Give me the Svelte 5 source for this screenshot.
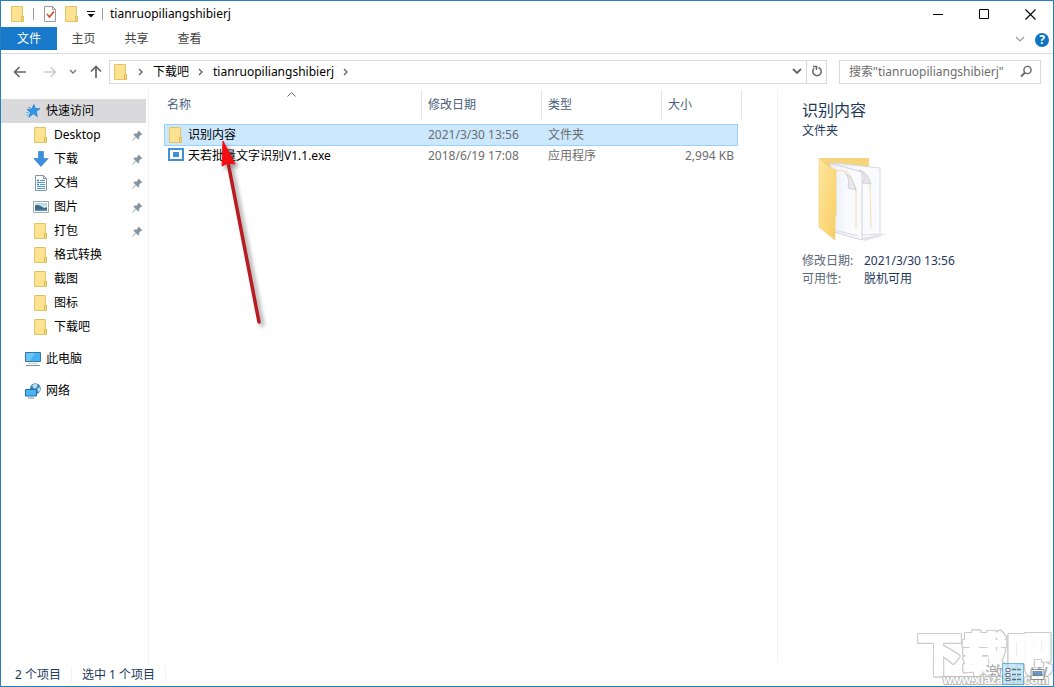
<script>
  let query = $state('');
  const places = [
    { name: 'Desktop', icon: 'folder', pinned: true },
    { name: '下载', icon: 'download', pinned: true },
    { name: '文档', icon: 'document', pinned: true },
    { name: '图片', icon: 'picture', pinned: true },
    { name: '打包', icon: 'folder', pinned: true },
    { name: '格式转换', icon: 'folder' },
    { name: '截图', icon: 'folder' },
    { name: '图标', icon: 'folder' },
    { name: '下载吧', icon: 'folder' }
  ];
  const files = [
    { name: '识别内容', icon: 'folder', date: '2021/3/30 13:56', type: '文件夹', size: '', selected: true },
    { name: '天若批量文字识别V1.1.exe', icon: 'app', date: '2018/6/19 17:08', type: '应用程序', size: '2,994 KB' }
  ];
</script>

{#snippet icon(kind)}
  <svg class="icon" width="16" height="16" viewBox="0 0 16 16" aria-hidden="true">
    {#if kind === 'folder'}
      <path d="M1.500 .5h11v10h1v5h-12z" fill="#fde391" stroke="#e3c468" />
      <path d="M11.500 15v-4.500h2v4.500z" fill="#f8d775" stroke="#e0bd5b" />
    {:else if kind === 'download'}
      <path d="M5.500 .5h5v7h4.700L8 15.500.8 7.500h4.700z" fill="#3b8fe0" stroke="#2f79c8" stroke-width=".6" />
    {:else if kind === 'document'}
      <path d="M2.500 .5h8l3 3v12h-11z" fill="#fff" stroke="#8496a4" />
      <path d="M10.500 .5v3h3" fill="none" stroke="#8496a4" />
      <path d="M7 5.500h5M4 7.500h8M7 9.500h5M4 11.500h8M4 13.500h8" stroke="#4a9bd1" />
      <path d="M4.200 5.500h1.800M4.200 9.500h1.800" stroke="#1d6fb3" stroke-width="1.500" />
    {:else if kind === 'picture'}
      <path d="M.5 2.500h15v11H.5z" fill="#fff" stroke="#a4a9ad" />
      <path d="M2 4h12v3.500H2z" fill="#b9dcf2" />
      <path d="M2 6.500q3-1.500 6 .8t6 .7v3H2z" fill="#3d6a78" />
      <path d="M2 10.500h12V12H2z" fill="#4e91c4" />
    {:else if kind === 'star'}
      <path d="M9 1.500l1.200 4 4.800.1-3.800 3 1.200 4.900-4-2.700-4.600 3.400 1.700-5L2 6.500l4.800-.6z" fill="#2f96e8" stroke="#1b78c8" stroke-width=".7" />
      <path d="M1 9.500h3M1 11.800h3M3 4.500h3" stroke="#6cb8ee" />
    {:else if kind === 'pc'}
      <path d="M.5 1.500h15v9H.5z" fill="#45b3f3" stroke="#36769f" />
      <path d="M1 2h9L5 10H1z" fill="#86d2fb" opacity=".6" />
      <path d="M1 14.500h14" stroke="#7c8e9b" />
      <path d="M3 12.500h10" stroke="#c5d0d8" />
    {:else if kind === 'network'}
      <circle cx="10.400" cy="5.600" r="5.400" fill="#3a83b5" />
      <path d="M7 3q3-3.500 5-1.500T9.500 6zM12 6l3-2q1 3-1.500 5.500z" fill="#b5dcf2" />
      <path d="M.5 6.500h11v6.500H.5z" fill="#47b5f5" stroke="#2b6b96" />
      <path d="M3 15h6" stroke="#7790a1" />
    {:else if kind === 'app'}
      <path d="M1 1h14v11H1z" fill="#fff" stroke="#4092d6" stroke-width="2" />
      <path d="M5 4h6v5H5z" fill="#4092d6" />
    {/if}
  </svg>
{/snippet}

{#snippet chevron()}
  <svg width="6" height="8" viewBox="0 0 6 8" aria-hidden="true"><path d="M1 1l3 3-3 3" fill="none" stroke="#666" stroke-width="1.400" /></svg>
{/snippet}

<div class="window">
  <header class="titlebar">
    <span class="title-icon">{@render icon('folder')}</span>
    <i class="bar"></i>
    <button class="plain" aria-label="属性">
      <svg width="14" height="16" viewBox="0 0 14 16"><path d="M1.500 .5h8l3 3v12h-11z" fill="#fff" stroke="#9b9b9b" /><path d="M9.500 .5v3h3" fill="none" stroke="#9b9b9b" /><path d="M4 8l2.500 3L11 5.500" fill="none" stroke="#d6492a" stroke-width="1.600" /></svg>
    </button>
    <button class="plain" aria-label="新建文件夹">{@render icon('folder')}</button>
    <button class="plain" aria-label="自定义快速访问工具栏">
      <svg width="8" height="8" viewBox="0 0 8 8"><path d="M0 1.500h8" stroke="#111" /><path d="M.5 4h7L4 7.500z" fill="#111" /></svg>
    </button>
    <i class="bar"></i>
    <h1>tianruopiliangshibierj</h1>
    <div class="controls">
      <button aria-label="最小化"><svg width="11" height="11"><path d="M0 5.500h10" stroke="#000" /></svg></button>
      <button aria-label="最大化"><svg width="11" height="11"><path d="M.5 .5h9v9h-9z" fill="none" stroke="#000" /></svg></button>
      <button aria-label="关闭"><svg width="11" height="11"><path d="M.5 .5l10 10M10.500 .5l-10 10" stroke="#000" stroke-width="1.100" /></svg></button>
    </div>
  </header>

  <nav class="ribbon" aria-label="功能区">
    <button class="file">文件</button>
    <button>主页</button>
    <button>共享</button>
    <button>查看</button>
    <span class="spacer"></span>
    <button class="plain" aria-label="展开功能区"><svg width="10" height="6"><path d="M1 1l4 4 4-4" fill="none" stroke="#999" stroke-width="1.200" /></svg></button>
    <button class="plain help" aria-label="帮助">?</button>
  </nav>

  <div class="address-row">
    <button class="plain" aria-label="后退"><svg width="14" height="12"><path d="M13 6H2M6.500 1L1.500 6l5 5" fill="none" stroke="#666" stroke-width="1.600" /></svg></button>
    <button class="plain" aria-label="前进"><svg width="14" height="12"><path d="M1 6h11M7.500 1l5 5-5 5" fill="none" stroke="#ccc" stroke-width="1.400" /></svg></button>
    <button class="plain recent" aria-label="最近位置"><svg width="8" height="6"><path d="M1 1l3 3 3-3" fill="none" stroke="#777" stroke-width="1.400" /></svg></button>
    <button class="plain up" aria-label="上移"><svg width="12" height="14"><path d="M6 13V2M1 6.500l5-5 5 5" fill="none" stroke="#666" stroke-width="1.700" /></svg></button>
    <div class="address">
      {@render icon('folder')}
      {@render chevron()}
      <a href="#parent">下载吧</a>
      {@render chevron()}
      <a href="#current">tianruopiliangshibierj</a>
      {@render chevron()}
      <span class="spacer"></span>
      <button class="plain drop" aria-label="历史记录"><svg width="10" height="7"><path d="M1 1l4 4 4-4" fill="none" stroke="#666" stroke-width="1.800" /></svg></button>
      <button class="plain refresh" aria-label="刷新"><svg width="12" height="13"><path d="M7.500 2.500a4.200 4.200 0 1 1-4.300.8" fill="none" stroke="#666" stroke-width="1.500" /><path d="M2 1.500h3.500V5" fill="none" stroke="#666" stroke-width="1.500" /></svg></button>
    </div>
    <label class="search">
      <input type="text" aria-label="搜索" placeholder={'搜索"tianruopiliangshibierj"'} bind:value={query} />
      <svg width="13" height="13" aria-hidden="true"><circle cx="7.500" cy="5" r="3.600" fill="none" stroke="#666" stroke-width="1.400" /><path d="M5 7.500L1 11.500" stroke="#666" stroke-width="1.800" /></svg>
    </label>
  </div>

  <main>
    <nav class="places" aria-label="导航窗格">
      <a class="root current" href="#quick">{@render icon('star')}快速访问</a>
      {#each places as place}
        <a class="child" href="#place">
          {@render icon(place.icon)}<span>{place.name}</span>
          {#if place.pinned}
            <svg class="pin" width="11" height="11" viewBox="0 0 11 11" aria-hidden="true"><path d="M6.500 .5l4 4-1 .6-.8-.2-1.700 2 .1 1.800-.9.8L4 7.200.8 10.600l-.5-.5L3.600 6.800 1.300 4.500l.9-.9 2 .2 1.900-1.700-.3-.9z" fill="#8494a1" /></svg>
          {/if}
        </a>
      {/each}
      <a class="root group" href="#pc">{@render icon('pc')}此电脑</a>
      <a class="root group" href="#network">{@render icon('network')}网络</a>
    </nav>

    <section class="files">
      <table>
        <thead>
          <tr>
            <th class="name">名称<svg class="sort" width="9" height="5" aria-hidden="true"><path d="M.5 4.500l4-4 4 4" fill="none" stroke="#666" /></svg></th>
            <th>修改日期</th>
            <th>类型</th>
            <th class="size">大小</th>
          </tr>
        </thead>
        <tbody>
          {#each files as file}
            <tr class:selected={file.selected}>
              <td><span class="file-name">{@render icon(file.icon)}{file.name}</span></td>
              <td>{file.date}</td>
              <td>{file.type}</td>
              <td class="size">{file.size}</td>
            </tr>
          {/each}
        </tbody>
      </table>
    </section>

    <aside class="details">
      <h2>识别内容</h2>
      <p>文件夹</p>
      <svg class="preview" width="72" height="88" viewBox="0 0 72 88" aria-hidden="true">
        <defs>
          <linearGradient id="cover" x2="1" y2="1"><stop stop-color="#ffe6a0" /><stop offset="1" stop-color="#f8ce62" /></linearGradient>
          <linearGradient id="sheet" x2="1"><stop stop-color="#e8edf4" /><stop offset=".6" stop-color="#fafbfe" /></linearGradient>
        </defs>
        <path d="M44 82l26-5-8 4-15 4z" fill="#e5e3e6" />
        <path d="M2 2h50v20H20z" fill="#f5d47c" />
        <path d="M17 7l46 5v66l-18 1z" fill="url(#sheet)" stroke="#d9dae2" />
        <path d="M53 28l1 44" fill="none" stroke="#f3dfae" />
        <path d="M44 15q5 3 2 12l8 1q-3-12-12-14z" fill="#e6e6ea" stroke="#bdbdc2" stroke-width=".6" />
        <path d="M13 7l32 9v68l-28-8z" fill="url(#sheet)" stroke="#d0d2da" />
        <path d="M19 15q10-2 14 4l6 14v40" fill="none" stroke="#f2ddb0" />
        <path d="M28 17q5 4 3 15l8 2q-3-13-11-17z" fill="#e9e9ed" stroke="#bcbcc3" stroke-width=".6" />
        <path d="M17 74l24 6" stroke="#d7d7df" />
        <path d="M2 2q5 7 17 12v45l-1 2v23L2 71z" fill="url(#cover)" stroke="#f2ce70" stroke-width=".6" />
      </svg>
      <dl>
        <dt>修改日期:</dt><dd>2021/3/30 13:56</dd>
        <dt>可用性:</dt><dd>脱机可用</dd>
      </dl>
    </aside>
  </main>

  <footer>
    <span>2 个项目</span>
    <span>选中 1 个项目</span>
  </footer>

  <svg class="arrow" width="60" height="200" viewBox="0 0 60 200" aria-hidden="true">
    <path d="M17 27L49 192" stroke="#b81c22" stroke-width="3.500" stroke-linecap="round" />
    <path d="M13 11L25 34l-7-1-6 3z" fill="#f30d12" stroke="#f30d12" />
  </svg>

  <div class="watermark">
    <span class="brand">下载吧</span>
    <span class="activate">激<span class="w">W</span></span>
    <span class="url">www.xiazaiba.com</span>
    <div class="views">
      <button class="on" aria-label="详细信息视图"><svg width="17" height="15"><path d="M1 1.500h4v3H1zM1 6.500h4v3H1zM1 11.500h4v2H1z" fill="#fff" stroke="#557" /><path d="M7 2.500h4M12 2.500h4M7 7.500h4M12 7.500h4M7 12.500h4M12 12.500h4" stroke="#456" stroke-width="1.500" /></svg></button>
      <button aria-label="大图标视图"><svg width="15" height="13"><path d="M1 1.500h13v10H1z" fill="#fff" stroke="#777" /><path d="M2.500 3h10v4h-10z" fill="#5184c4" /><path d="M2.500 6l5 1 5-1v2h-10z" fill="#547a78" /></svg></button>
    </div>
  </div>
</div>

<style>
  :global(body) { margin: 0; }
  * { box-sizing: border-box; }
  .window {
    position: relative;
    display: flex;
    flex-direction: column;
    min-height: 100vh;
    border: 1px solid #2580bb;
    background: #fff;
    color: #1a1a1a;
    font: 12px/16px "Noto Sans", "Noto Sans CJK SC", sans-serif;
    overflow: hidden;
  }
  button, input { font: inherit; color: inherit; border: 0; background: none; padding: 0; }
  a { color: inherit; text-decoration: none; }
  svg { display: block; flex: none; }
  h1, h2, p, dl, dd { margin: 0; font-weight: 400; }
  .plain { display: flex; align-items: center; justify-content: center; }
  .spacer { flex: 1; }

  .titlebar { display: flex; align-items: center; gap: 7px; height: 26px; padding-left: 9px; }
  .bar { width: 1px; height: 12px; background: #999; }
  .bar + button { margin-left: 2px; }
  h1 { font-size: 12px; color: #000; }
  .controls { display: flex; margin-left: auto; align-self: stretch; }
  .controls button { display: grid; place-items: center; width: 46px; }

  .ribbon { display: flex; align-items: center; height: 27px; padding: 0 4px 3px 0; border-bottom: 1px solid #dadbdc; color: #444; }
  .ribbon button { height: 23px; width: 53px; padding-top: 1px; }
  .ribbon .file { width: 56px; background: #1979ca; color: #fff; }
  .ribbon .plain { width: 24px; }
  .ribbon .help { width: 14px; height: 14px; padding: 0; margin: 2px 0 0 3px; border-radius: 50%; background: #0f73c4; color: #fff; font-weight: 700; }

  .address-row { display: flex; align-items: center; height: 35px; padding: 0 12px; }
  .address-row > .plain { width: 14px; margin-right: 16px; height: 22px; }
  .address-row > .recent { width: 8px; margin: 0 12px 0 -4px; }
  .address-row > .up { margin-right: 6px; }
  .address { display: flex; align-items: center; flex: 1; height: 24px; border: 1px solid #d9d9d9; padding-left: 3px; gap: 9px; color: #000; }
  .drop { width: 18px; height: 22px; }
  .refresh { width: 20px; height: 22px; margin-left: -9px; border-left: 1px solid #d9d9d9; }
  .search { display: flex; align-items: center; width: 202px; height: 24px; margin-left: 12px; padding: 0 7px 0 9px; border: 1px solid #d9d9d9; }
  .search input { flex: 1; min-width: 0; outline: 0; }
  .search input::placeholder { color: #6d6d6d; opacity: 1; }

  main { display: flex; flex: 1; min-height: 0; }
  .places { width: 148px; padding: 10px 2px 0 0; border-right: 1px solid #f3f3f3; color: #000; }
  .places a { display: flex; align-items: center; gap: 5px; height: 24px; }
  .places .root { padding-left: 24px; }
  .places .child { padding-left: 32px; }
  .places .current { background: #d9d9dc; }
  .places .group { margin-top: 8px; }
  .pin { margin-left: auto; margin-right: 3px; }

  .files { flex: 1; min-width: 0; padding: 1px 0 0 15px; }
  table { width: 574px; table-layout: fixed; border-collapse: separate; border-spacing: 0; color: #6d6d6d; }
  th { position: relative; width: 120px; height: 34px; padding: 0 0 4px 6px; text-align: left; font-weight: 400; color: #4c607a; }
  th::after { content: ""; position: absolute; right: 0; top: 0; width: 1px; height: 29px; background: #e5e5e5; }
  th.name { width: 258px; padding-left: 3px; }
  th.size { width: 76px; }
  th.size::after { right: -4px; }
  .sort { position: absolute; left: 123px; top: 2px; }
  td { height: 20px; padding: 0 0 0 6px; border: 1px solid transparent; border-width: 1px 0; }
  td:first-child { padding-left: 4px; color: #000; }
  td.size { padding: 0 4px 0 0; text-align: right; }
  .selected td { height: 22px; background: #cce8ff; border-color: #99d1ff; }
  .selected td:first-child { border-left: 1px solid #99d1ff; padding-left: 3px; }
  .selected td:last-child { border-right: 1px solid #99d1ff; }
  .file-name { display: flex; align-items: center; gap: 4px; }

  .details { width: 276px; padding: 11px 24px; border-left: 1px solid #f3f3f3; color: #1e395b; }
  h2 { font-size: 16px; line-height: 20px; }
  .details p { margin-top: 3px; }
  .preview { margin: 17px 0 9px 15px; }
  dl { display: grid; grid-template-columns: 62px 1fr; row-gap: 2px; }
  dt { color: #5a6779; }

  footer { display: flex; align-items: center; height: 23px; padding-left: 14px; color: #1e395b; }
  footer span { padding-right: 10px; margin-right: 10px; border-right: 1px solid #f0f0f0; }

  .arrow { position: absolute; left: 209px; top: 129px; filter: drop-shadow(3px 3px 2px rgba(0, 0, 0, .4)); }

  .watermark { position: absolute; right: 0; bottom: 0; width: 136px; height: 64px; color: #aaa; }
  .brand { position: absolute; left: 0; top: 0; font: 900 45px/60px "Noto Sans CJK SC", sans-serif; color: #fff; -webkit-text-stroke: 2px #fff; white-space: nowrap; filter: drop-shadow(1px 0 0 #ccc) drop-shadow(-1px 0 0 #ccc) drop-shadow(0 1px 0 #ccc) drop-shadow(0 -1px 0 #ccc); }
  .activate { position: absolute; left: 68px; top: 40px; font-size: 18px; line-height: 22px; white-space: nowrap; }
  .activate .w { margin-left: 28px; }
  .url { position: absolute; left: 26px; bottom: -2px; font: 700 12px/16px "Liberation Sans", sans-serif; color: #fff; -webkit-text-stroke: 2px #bbb; paint-order: stroke fill; }
  .views { position: absolute; right: 5px; bottom: 1px; display: flex; gap: 2px; }
  .views button { display: grid; place-items: center; width: 22px; height: 22px; opacity: .8; }
  .views .on { background: rgba(166, 220, 245, .8); border: 1px solid #4fa7c9; }
</style>
